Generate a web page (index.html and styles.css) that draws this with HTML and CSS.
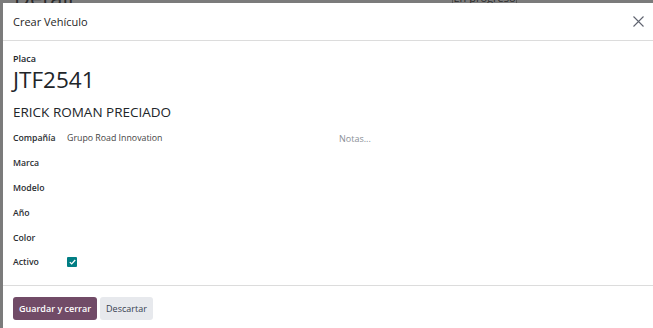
FILE: index.html
```html
<!DOCTYPE html>
<html lang="es">
<head>
    <meta charset="UTF-8">
    <title>Crear Vehículo</title>
    <link rel="stylesheet" href="styles.css">
</head>
<body>
    <div class="backdrop-page">
        <span class="bg-title">Detail</span>
        <span class="bg-status">En progreso</span>
    </div>

    <div class="modal">
        <header class="modal-header">
            <h4 class="modal-title">Crear Vehículo</h4>
            <button class="btn-close" type="button" aria-label="Cerrar">
                <svg width="11" height="11" viewBox="0 0 11 11">
                    <path d="M0.5 0.5L10.5 10.5M10.5 0.5L0.5 10.5" stroke="#5f636f" stroke-width="1.1" fill="none"/>
                </svg>
            </button>
        </header>

        <main class="modal-body">
            <div class="field-label">Placa</div>
            <div class="plate">JTF2541</div>
            <div class="owner">ERICK ROMAN PRECIADO</div>

            <div class="form-grid">
                <div class="rows">
                    <div class="row"><label>Compañía</label><span class="value">Grupo Road Innovation</span></div>
                    <div class="row"><label>Marca</label><span class="value"></span></div>
                    <div class="row"><label>Modelo</label><span class="value"></span></div>
                    <div class="row"><label>Año</label><span class="value"></span></div>
                    <div class="row"><label>Color</label><span class="value"></span></div>
                    <div class="row">
                        <label>Activo</label>
                        <span class="value">
                            <span class="check">
                                <svg width="7" height="6" viewBox="0 0 7 6">
                                    <path d="M0.8 3.1L2.7 4.9L6.2 1" stroke="#fff" stroke-width="1.3" fill="none"/>
                                </svg>
                            </span>
                        </span>
                    </div>
                </div>
                <div class="notes">Notas...</div>
            </div>
        </main>

        <footer class="modal-footer">
            <button class="btn btn-primary" type="button">Guardar y cerrar</button>
            <button class="btn btn-secondary" type="button">Descartar</button>
        </footer>
    </div>
</body>
</html>
```

FILE: styles.css
```css
body {
    margin: 0;
    padding: 3px 0 0 3px;
    background-color: #7b7b7b;
    font-family: "Open Sans", "Noto Sans", sans-serif;
    color: #212529;
    overflow: hidden;
    height: 100vh;
    box-sizing: border-box;
}
.backdrop-page {
    position: absolute;
    top: 0;
    left: 0;
    width: 100%;
    height: 3px;
    overflow: hidden;
    color: #2b2b2b;
}
.bg-title {
    position: absolute;
    left: 14px;
    top: -18px;
    font-size: 22px;
}
.bg-status {
    position: absolute;
    left: 452px;
    top: -14px;
    width: 65px;
    height: 17px;
    border-left: 1px solid #555;
    border-right: 1px solid #555;
    font-size: 11px;
    line-height: 23px;
    text-align: center;
    box-sizing: border-box;
}
.modal {
    position: relative;
    background: #fff;
    width: 700px;
    min-height: 360px;
}
.modal-header {
    display: flex;
    align-items: center;
    justify-content: space-between;
    height: 38px;
    padding: 0 10px;
    border-bottom: 1px solid #dcdcdc;
    box-sizing: border-box;
}
.modal-title {
    margin: 0;
    font-size: 11px;
    font-weight: 500;
    color: #1f1f1f;
}
.btn-close {
    background: none;
    border: none;
    padding: 0;
    margin-right: 49px;
    cursor: pointer;
    display: flex;
}
.modal-body {
    padding: 12px 10px 10px;
}
.field-label {
    font-size: 9px;
    font-weight: 600;
    line-height: 12px;
}
.plate {
    font-size: 22.5px;
    line-height: 30px;
}
.owner {
    font-size: 13.5px;
    line-height: 20px;
    margin-top: 7px;
}
.form-grid {
    display: flex;
    margin-top: 4px;
}
.rows {
    display: flex;
    flex-direction: column;
    width: 326px;
}
.row {
    display: flex;
    align-items: center;
    height: 24.8px;
}
.row label {
    width: 54px;
    font-size: 8.7px;
    font-weight: 600;
    color: #2a2d31;
}
.value {
    font-size: 8.8px;
    color: #444;
    display: flex;
}
.check {
    display: flex;
    align-items: center;
    justify-content: center;
    width: 10px;
    height: 10px;
    border-radius: 1px;
    background: #017e84;
}
.notes {
    font-size: 9px;
    color: #8a8f96;
    height: 25px;
    line-height: 25px;
}
.modal-footer {
    display: flex;
    gap: 3px;
    padding: 11px 10px;
    border-top: 1px solid #dcdcdc;
}
.btn {
    font-family: inherit;
    font-size: 9px;
    font-weight: 600;
    height: 23px;
    padding: 0 6px;
    border: none;
    border-radius: 3px;
    cursor: pointer;
}
.btn-primary {
    background-color: #714b67;
    color: #fff;
}
.btn-secondary {
    background-color: #e7e9ed;
    color: #374151;
    font-weight: 500;
}
```
